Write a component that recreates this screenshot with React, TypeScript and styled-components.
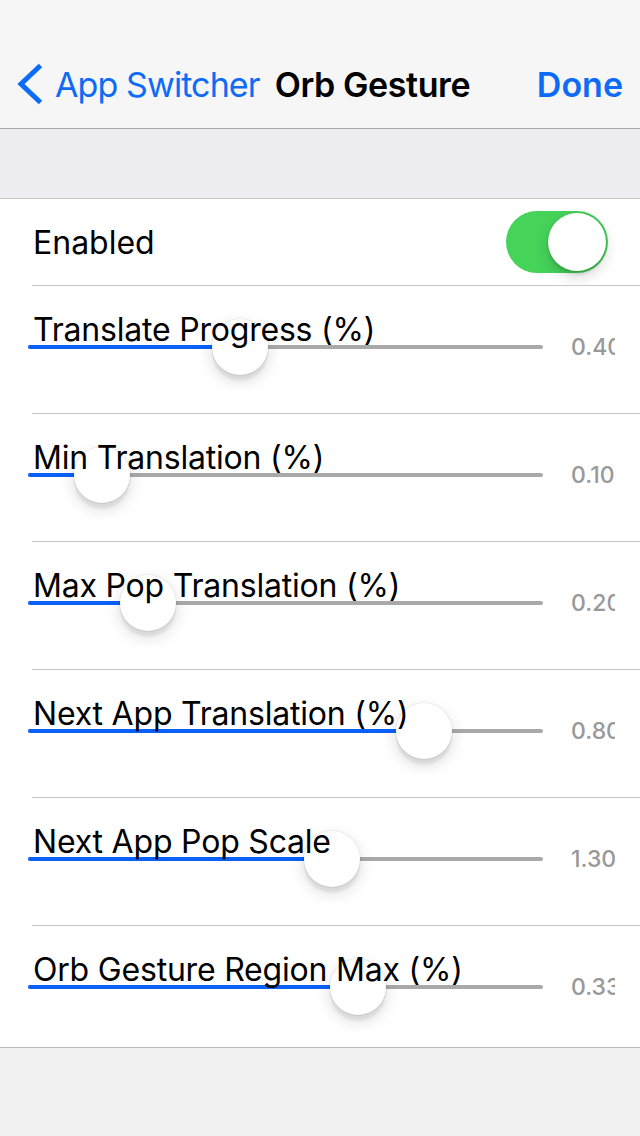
import React from 'react';
import styled, { createGlobalStyle } from 'styled-components';

const GlobalStyle = createGlobalStyle`
  html, body { margin: 0; padding: 0; }
  body {
    background: #f1f1f1;
    font-family: Inter, "Noto Sans", "Liberation Sans", sans-serif;
    -webkit-font-smoothing: antialiased;
  }
`;

const BLUE = '#0e6bf7';

const Screen = styled.div`
  width: 640px;
  height: 1136px;
  overflow: hidden;
  display: flex;
  flex-direction: column;
  background: #f1f1f1;
`;

const NavBar = styled.header`
  height: 88px;
  padding: 40px 17px 0 17px;
  background: #f6f6f6;
  border-bottom: 1px solid #a9a9ac;
  display: flex;
  align-items: center;
`;

const BackButton = styled.div`
  display: flex;
  align-items: center;
  gap: 12px;
  color: ${BLUE};
  font-size: 34px;
  letter-spacing: -0.9px;
`;

const Title = styled.div`
  margin-left: 15px;
  font-size: 34px;
  font-weight: 600;
  letter-spacing: -0.4px;
  color: #000;
`;

const Spacer = styled.div`
  flex: 1;
`;

const DoneButton = styled.div`
  font-size: 34px;
  font-weight: 600;
  color: ${BLUE};
`;

const SectionGap = styled.div`
  height: 69px;
  background: #ececf1;
  border-bottom: 1px solid #c8c7cc;
`;

const Group = styled.section`
  background: #fff;
  border-bottom: 1px solid #b9b9bd;
  display: flex;
  flex-direction: column;
`;

const Divider = styled.div`
  height: 1px;
  margin-left: 32px;
  background: #c8c7cc;
`;

const SwitchRow = styled.div`
  height: 86px;
  padding: 0 32px 0 33px;
  display: flex;
  align-items: center;
  justify-content: space-between;
`;

const RowLabel = styled.div`
  font-size: 32px;
  color: #000;
`;

const SwitchTrack = styled.div<{ $on: boolean }>`
  width: 102px;
  height: 62px;
  border-radius: 31px;
  background: ${(p) => (p.$on ? '#45d35a' : '#e5e5ea')};
  display: flex;
  align-items: center;
  justify-content: ${(p) => (p.$on ? 'flex-end' : 'flex-start')};
  padding: 0 2px;
  box-sizing: border-box;
`;

const SwitchKnob = styled.div`
  width: 58px;
  height: 58px;
  border-radius: 50%;
  background: #fff;
  box-shadow: 0 6px 14px rgba(0, 0, 0, 0.16), 0 4px 2px rgba(0, 0, 0, 0.08),
    0 0 0 1px rgba(0, 0, 0, 0.05);
`;

const SliderRow = styled.div<{ $height: number }>`
  height: ${(p) => p.$height}px;
  padding-left: 28px;
  display: grid;
  grid-template-columns: 515px 44px;
  column-gap: 28px;
  align-items: start;
`;

const SliderStack = styled.div`
  display: grid;
  & > * {
    grid-area: 1 / 1;
  }
`;

const SliderLabel = styled.div`
  position: relative;
  z-index: 2;
  margin-top: 24px;
  padding-left: 5px;
  font-size: 32px;
  line-height: 40px;
  letter-spacing: -0.2px;
  color: #000;
  white-space: nowrap;
  pointer-events: none;
`;

const Track = styled.div`
  position: relative;
  margin-top: 59px;
  height: 4px;
  border-radius: 2px;
  background: #a9a9a9;
`;

const TrackFill = styled.div`
  position: absolute;
  left: 0;
  top: 0;
  bottom: 0;
  border-radius: 2px;
  background: #0a60f8;
`;

const Thumb = styled.div`
  position: absolute;
  top: -26px;
  width: 56px;
  height: 56px;
  border-radius: 50%;
  background: #fff;
  box-shadow: 0 6px 16px rgba(0, 0, 0, 0.15), 0 6px 2px rgba(0, 0, 0, 0.06),
    0 0 0 1px rgba(0, 0, 0, 0.05);
`;

const ValueText = styled.div`
  margin-top: 50px;
  font-size: 23px;
  line-height: 23px;
  font-weight: 500;
  color: #999;
  white-space: nowrap;
  overflow: hidden;
`;

const Footer = styled.div`
  flex: 1;
  background: #f1f1f1;
`;

type SliderItem = { label: string; value: string; frac: number };

const sliders: SliderItem[] = [
  { label: 'Translate Progress (%)', value: '0.40', frac: 0.4 },
  { label: 'Min Translation (%)', value: '0.10', frac: 0.1 },
  { label: 'Max Pop Translation (%)', value: '0.20', frac: 0.2 },
  { label: 'Next App Translation (%)', value: '0.80', frac: 0.802 },
  { label: 'Next App Pop Scale', value: '1.30', frac: 0.602 },
  { label: 'Orb Gesture Region Max (%)', value: '0.33', frac: 0.658 },
];

const TRAVEL = 459;

const Chevron = () => (
  <svg width="26" height="42" viewBox="0 0 26 42" fill="none">
    <polyline
      points="23.5,2.5 4,21 23.5,39.5"
      stroke={BLUE}
      strokeWidth="5"
      strokeLinecap="butt"
      strokeLinejoin="miter"
    />
  </svg>
);

export default function App() {
  return (
    <Screen>
      <GlobalStyle />
      <NavBar>
        <BackButton>
          <Chevron />
          <span>App Switcher</span>
        </BackButton>
        <Title>Orb Gesture</Title>
        <Spacer />
        <DoneButton>Done</DoneButton>
      </NavBar>
      <SectionGap />
      <Group>
        <SwitchRow>
          <RowLabel>Enabled</RowLabel>
          <SwitchTrack $on>
            <SwitchKnob />
          </SwitchTrack>
        </SwitchRow>
        {sliders.map((s, i) => (
          <React.Fragment key={s.label}>
            <Divider />
            <SliderRow $height={i === sliders.length - 1 ? 121 : 127}>
              <SliderStack>
                <SliderLabel>{s.label}</SliderLabel>
                <Track>
                  <TrackFill style={{ width: `${28 + s.frac * TRAVEL}px` }} />
                  <Thumb style={{ left: `${s.frac * TRAVEL}px` }} />
                </Track>
              </SliderStack>
              <ValueText>{s.value}</ValueText>
            </SliderRow>
          </React.Fragment>
        ))}
      </Group>
      <Footer />
    </Screen>
  );
}
